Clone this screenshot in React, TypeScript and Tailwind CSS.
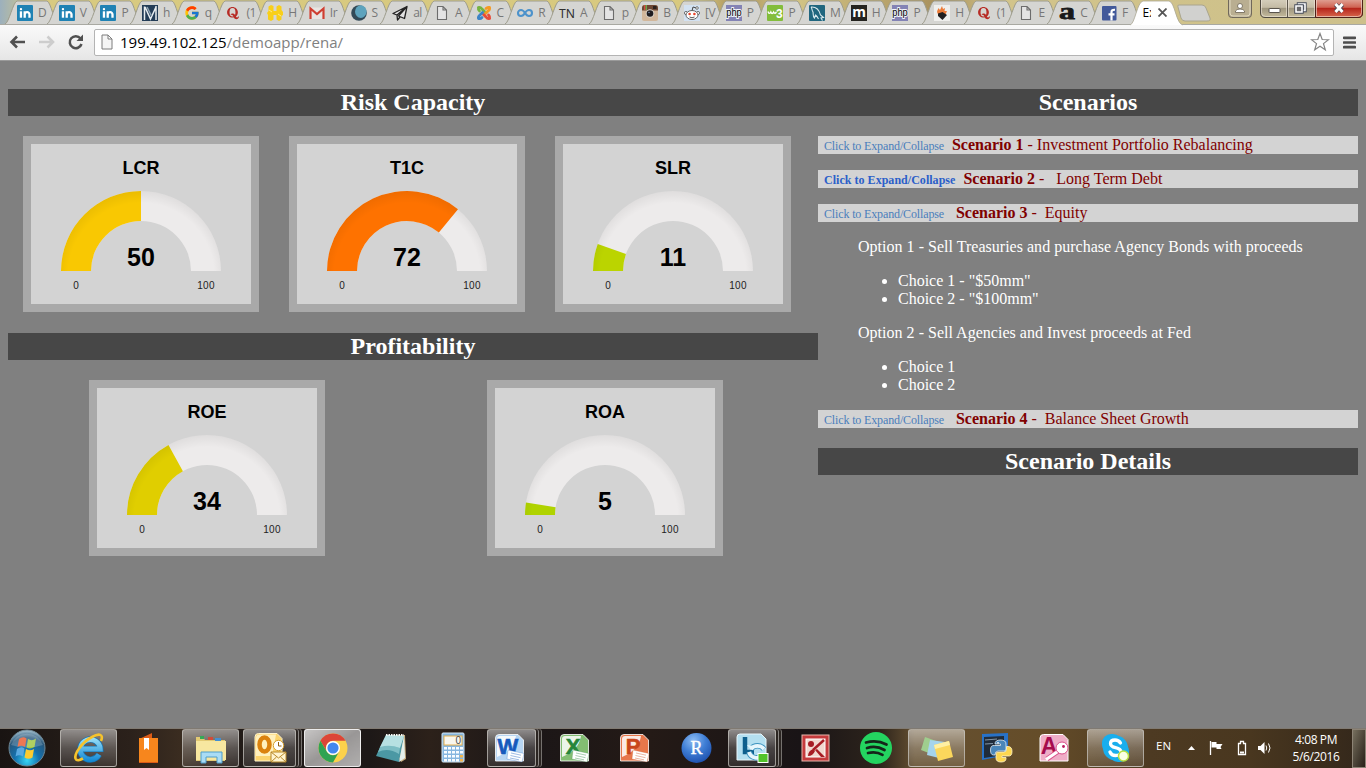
import React from "react";
import type { ReactNode } from "react";
import { FaQuora } from "react-icons/fa";
import { FcGoogle } from "react-icons/fc";

/* ---------- favicons ---------- */

function Fav({ children }: { children: ReactNode }) {
  return (
    <svg viewBox="0 0 16 16" className="h-4 w-4 shrink-0 overflow-visible">
      {children}
    </svg>
  );
}

const LinkedIn = () => (
  <Fav>
    <rect width="16" height="16" rx="1" fill="#1f82b4" />
    <rect x="2.800" y="6.300" width="2.300" height="6.400" fill="#fff" />
    <rect x="2.800" y="3" width="2.300" height="2.300" rx="1" fill="#fff" />
    <path d="M7.700 12.700V6.300M7.700 9.600c0-3 4.800-3.400 4.800 0v3.100" stroke="#fff" strokeWidth="2.300" fill="none" />
  </Fav>
);

const PageIcon = () => (
  <Fav>
    <path d="M3.500 1.500h5.500l3.500 3.500v9.500h-9zM9 1.500V5h3.500" fill="#e4e4e4" stroke="#6c6c6c" strokeWidth="1.100" />
  </Fav>
);

const MIcon = () => (
  <Fav>
    <rect width="16" height="16" fill="#243d57" />
    <path d="M2.500 15V1.500M3 2l5.500 12L14 2M14 1v14" stroke="#e8edf0" strokeWidth="1.500" fill="none" />
    <path d="M5 2l4.500 9" stroke="#8fa3b2" strokeWidth="1.500" />
  </Fav>
);

const GoogleIcon = () => <FcGoogle className="h-4 w-4 shrink-0" />;
const QuoraIcon = () => <FaQuora className="h-4 w-4 shrink-0 p-[1px] text-[#b72c26]" />;

const HiveIcon = () => (
  <Fav>
    <path d="M1.500 1.500L4 0l2.500 1v5h3V1.500L12 0l2.500 1.500V5L16 7v3l-1.500 1v3.500L12 16l-2.500-1.500V10h-3v4.500L4 16l-3-1.500V10l-1-2 1.500-2z" fill="#f8cf19" />
    <path d="M2 5l3 2M11 9l3 2" stroke="#fff0a0" strokeWidth="0.800" />
  </Fav>
);

const GmailIcon = () => (
  <Fav>
    <rect x="0.500" y="2.500" width="15" height="11.500" rx="1" fill="#e9e5e2" />
    <path d="M1.500 14V3.500L8 9l6.500-5.500V14" stroke="#cf3f32" strokeWidth="2.200" fill="none" />
  </Fav>
);

const MoonIcon = () => (
  <Fav>
    <circle cx="8" cy="8" r="7.800" fill="#324a58" />
    <ellipse cx="9.800" cy="6.600" rx="5.800" ry="6.300" fill="#5da3bd" />
  </Fav>
);

const PlaneIcon = () => (
  <Fav>
    <path d="M15 1.500L1 8.500l4 1.500L15 1.500 6.500 11l6 2.500zM5 10l.5 5 2.500-3" fill="#e2e2e2" stroke="#222" strokeWidth="1.300" strokeLinejoin="round" />
  </Fav>
);

const JoomlaIcon = () => (
  <Fav>
    <g fill="none" strokeWidth="2.800" strokeLinecap="round">
      <path d="M2.500 2.500Q4.500 2 6 4l2.500 2.500" stroke="#76b441" />
      <path d="M13.500 2.500Q14 4.500 12 6L9.500 8.500" stroke="#f59a22" />
      <path d="M13.500 13.500Q11.500 14 10 12L7.500 9.500" stroke="#e84b38" />
      <path d="M2.500 13.500Q2 11.500 4 10l2.500-2.500" stroke="#3d84c6" />
      <path d="M2.500 3Q2 4.800 3.500 6" stroke="#76b441" />
      <path d="M13 2.500Q11.500 2 10 3.500" stroke="#f59a22" />
      <path d="M13.500 13Q14 11.500 12.500 10" stroke="#e84b38" />
      <path d="M3 13.500Q4.500 14 6 12.500" stroke="#3d84c6" />
    </g>
  </Fav>
);

const LoopIcon = () => (
  <Fav>
    <path d="M8 8C6.500 5.500 5.500 5 4 5a3 3 0 000 6c1.500 0 2.500-.5 4-3s2.500-3 4-3a3 3 0 010 6c-1.500 0-2.500-.5-4-3z" stroke="#4c92cb" strokeWidth="2.100" fill="none" />
  </Fav>
);

const TnIcon = () => (
  <Fav>
    <text x="0" y="12.500" fontSize="12.500" textLength="16" lengthAdjust="spacingAndGlyphs" fill="#2e2e2e" fontFamily="Noto Sans, sans-serif">TN</text>
  </Fav>
);

const InstaIcon = () => (
  <Fav>
    <rect width="16" height="16" rx="2" fill="#d2b79b" />
    <path d="M0 5.500h16V3a3 3 0 00-3-3H3a3 3 0 00-3 3z" fill="#6d4733" />
    <path d="M2 0h1.500v5H2z" fill="#d4483d" />
    <path d="M3.500 0H5v5H3.500z" fill="#6ba24a" />
    <rect x="11" y="1" width="3.500" height="3" fill="#2b211d" />
    <circle cx="8" cy="8.500" r="4.300" fill="#d9d2c8" />
    <circle cx="8" cy="8.500" r="3.300" fill="#1f1c1f" />
    <circle cx="7" cy="7.500" r="0.800" fill="#7488a8" />
  </Fav>
);

const RedditIcon = () => (
  <Fav>
    <rect width="16" height="16" fill="#d3e2f2" />
    <path d="M8 6l1-4 3.500 1" stroke="#444" fill="none" />
    <circle cx="13" cy="3" r="1.300" fill="#fff" stroke="#555" strokeWidth="0.800" />
    <circle cx="2" cy="8" r="1.600" fill="#fff" stroke="#555" strokeWidth="0.800" />
    <circle cx="14" cy="8" r="1.600" fill="#fff" stroke="#555" strokeWidth="0.800" />
    <ellipse cx="8" cy="10" rx="6" ry="4.500" fill="#fff" stroke="#555" strokeWidth="0.900" />
    <circle cx="5.600" cy="9" r="1.300" fill="#e8442c" />
    <circle cx="10.400" cy="9" r="1.300" fill="#e8442c" />
    <path d="M5.500 12q2.500 1.500 5 0" stroke="#444" strokeWidth="0.900" fill="none" />
  </Fav>
);

const PhpIcon = () => (
  <Fav>
    <rect width="16" height="16" fill="#8383b5" />
    <text x="0.300" y="11" fontSize="10.500" textLength="15.400" lengthAdjust="spacingAndGlyphs" stroke="#f4f4fa" strokeWidth="2" paintOrder="stroke" fill="#000" fontFamily="Liberation Sans, sans-serif">php</text>
  </Fav>
);

const W3Icon = () => (
  <Fav>
    <rect width="16" height="16" rx="1" fill="#83bd3c" />
    <path d="M1 6.500q1.200 3.500 2.800.5 1.200 3 2.800 0 1.200 2.500 2.800 0" stroke="#fff" strokeWidth="1.400" fill="none" />
    <text x="9" y="12.500" fontSize="12" fontWeight="bold" fill="#fff" fontFamily="Liberation Sans, sans-serif">3</text>
  </Fav>
);

const MysqlIcon = () => (
  <Fav>
    <rect width="16" height="16" rx="1" fill="#20667f" />
    <path d="M2 2c6-.5 8.500 4 9.500 8l3 2.500-2.500.5 1.500 2.500M2 2c1.500 2 .5 3 2 5 .5 2-.5 4 1.500 6l1-3c1.500 1 2 2 3 4" stroke="#d8e8ed" strokeWidth="1.100" fill="none" />
  </Fav>
);

const DarkMIcon = () => (
  <Fav>
    <rect width="16" height="16" fill="#24231f" />
    <text x="8" y="12" textAnchor="middle" fontSize="14" fontWeight="bold" fill="#fff" fontFamily="Noto Sans, sans-serif">m</text>
  </Fav>
);

const FlameIcon = () => (
  <Fav>
    <rect width="16" height="16" fill="#efefed" />
    <path d="M4 9c-2-3 0-4 .5-6L6 5l2-4 1 3 2-1-.5 3L13 6c-1 2-1 3-2 4H5z" fill="#ec7b38" />
    <path d="M4 8.500l4.500-1.500 4.500 3L8.500 15 4 11z" fill="#211f20" />
  </Fav>
);

const AIcon = () => (
  <Fav>
    <text x="0" y="13.500" fontSize="23" fontWeight="bold" textLength="16" lengthAdjust="spacingAndGlyphs" fill="#191919" stroke="#191919" strokeWidth="0.800" fontFamily="Liberation Serif, serif">a</text>
  </Fav>
);

const FbIcon = () => (
  <Fav>
    <rect x="1" y="1" width="14.500" height="14.500" rx="1" fill="#42599a" />
    <path d="M10.500 15.500V7q0-2.500 3.500-2.200M7.500 9.300h6" stroke="#fff" strokeWidth="2.200" fill="none" />
  </Fav>
);

const tabs: { icon: () => ReactNode; label: string }[] = [
  { icon: LinkedIn, label: "D" },
  { icon: LinkedIn, label: "V" },
  { icon: LinkedIn, label: "P" },
  { icon: MIcon, label: "h" },
  { icon: GoogleIcon, label: "q" },
  { icon: QuoraIcon, label: "(1" },
  { icon: HiveIcon, label: "H" },
  { icon: GmailIcon, label: "Ir" },
  { icon: MoonIcon, label: "S" },
  { icon: PlaneIcon, label: "al" },
  { icon: PageIcon, label: "A" },
  { icon: JoomlaIcon, label: "C" },
  { icon: LoopIcon, label: "R" },
  { icon: TnIcon, label: "A" },
  { icon: PageIcon, label: "p" },
  { icon: InstaIcon, label: "B" },
  { icon: RedditIcon, label: "[V" },
  { icon: PhpIcon, label: "P" },
  { icon: W3Icon, label: "P" },
  { icon: MysqlIcon, label: "M" },
  { icon: DarkMIcon, label: "H" },
  { icon: PhpIcon, label: "P" },
  { icon: FlameIcon, label: "H" },
  { icon: QuoraIcon, label: "(1" },
  { icon: PageIcon, label: "E" },
  { icon: AIcon, label: "C" },
  { icon: FbIcon, label: "F" },
];

function Tab({ icon: Icon, label }: { icon: () => ReactNode; label: string }) {
  return (
    <div className="grid h-6 w-[41.7px] shrink-0">
      <svg viewBox="0 0 57 24" className="col-start-1 row-start-1 h-6 w-[57px] overflow-visible">
        <path d="M0 24C4 23 8 2 12 1H42C46 2 49 23 54 24" fill="#d5d5d2" stroke="#9d9c8c" />
      </svg>
      <div className="z-10 col-start-1 row-start-1 flex items-center gap-[5px] pl-3 pt-[2px] font-['Open_Sans',sans-serif] text-[12px] leading-4 text-[#777]">
        <Icon />
        <span className="w-3 whitespace-nowrap tracking-[-0.5px]">{label}</span>
      </div>
    </div>
  );
}

function TabStrip() {
  return (
    <div className="flex h-6 shrink-0 bg-[linear-gradient(90deg,#9cb0bd_0px,#d8ca80_35px,#d8c97f_700px,#a8905c_735px,#d4c686_790px,#a8905c_940px,#d2c48a_1000px,#cdc08b_1366px)] pl-[5px]">
      {tabs.map((t, i) => (
        <Tab key={i} icon={t.icon} label={t.label} />
      ))}
      <div className="z-10 grid h-[25px] w-[46px] shrink-0">
        <svg viewBox="0 0 56 25" className="col-start-1 row-start-1 h-[25px] w-14 overflow-visible">
          <path d="M-1 25C4 24 6 2 12 1H38C44 2 45 24 52 25" fill="#fff" stroke="#aaa693" strokeWidth="0.800" />
        </svg>
        <div className="z-10 col-start-1 row-start-1 flex items-center gap-[7px] pl-3 font-['Open_Sans',sans-serif] text-[12px] text-black">
          <span className="w-2 overflow-hidden">Ex</span>
          <svg viewBox="0 0 9 9" className="h-[9px] w-[9px]">
            <path d="M0.500 0.500l8 8M8.500 0.500l-8 8" stroke="#555" strokeWidth="1.800" />
          </svg>
        </div>
      </div>
      <svg viewBox="0 0 34 18" className="mt-[4px] h-[18px] w-[34px] shrink-0">
        <path d="M2 1h23q3 0 4 3l4 10q1 3-3 3H8q-3 0-4-3L1 3Q0 1 2 1z" fill="#d1d1cf" stroke="#aaa58e" />
      </svg>
      <div className="ml-[17px] flex h-[18px] gap-2">
        <svg viewBox="0 0 24 18" className="h-[18px] w-6">
          <path d="M.5-1v15q0 3.500 3 3.500h17q3 0 3-3.500V-1" fill="#b9ae91" stroke="#70685b" />
          <path d="M2-1v14q0 3 3 3h14q3 0 3-3V-1" fill="none" stroke="#e2dac1" />
          <path d="M7.500 12.500V11q1-2 4.500-2t4.500 2v1.500z" fill="#fff" stroke="#766e5e" strokeWidth="0.900" />
          <circle cx="12" cy="6" r="2.500" fill="#fff" stroke="#766e5e" strokeWidth="0.900" />
        </svg>
        <svg viewBox="0 0 103 18" className="h-[18px] w-[103px]">
          <defs>
            <linearGradient id="wb" x2="0" y2="1">
              <stop offset="0" stopColor="#d6cfbd" />
              <stop offset="0.450" stopColor="#c4bba5" />
              <stop offset="0.500" stopColor="#9f967f" />
              <stop offset="1" stopColor="#c6bc9d" />
            </linearGradient>
            <linearGradient id="wx" x2="0" y2="1">
              <stop offset="0" stopColor="#e1a598" />
              <stop offset="0.450" stopColor="#cf6252" />
              <stop offset="0.500" stopColor="#b5241a" />
              <stop offset="1" stopColor="#d9694f" />
            </linearGradient>
          </defs>
          <path d="M.5-1v14q0 4.500 4.500 4.500h93q4.500 0 4.500-4.500V-1z" fill="url(#wb)" stroke="#4f4940" />
          <path d="M55.500-1v18.500H98q4.500 0 4.500-4.500V-1z" fill="url(#wx)" stroke="#502019" />
          <path d="M1.500 0v12.500q0 4 4 4h21V0M28.500 0v16.500h26V0M56.500 0v16.500h41q4 0 4-4V0" stroke="#f0e8dc" strokeOpacity="0.600" fill="none" />
          <path d="M27.500 0v17" stroke="#5c564b" />
          <rect x="9" y="8.500" width="11" height="4" rx="0.500" fill="#fff" stroke="#59544d" />
          <path d="M38.500 4h6.500v6.500h-6.500z" fill="none" stroke="#474d5c" strokeWidth="3.400" />
          <path d="M38.500 4h6.500v6.500h-6.500z" fill="none" stroke="#fff" strokeWidth="1.600" />
          <path d="M36 6h6v6h-6z" fill="#8e8b87" stroke="#474d5c" strokeWidth="3.400" />
          <path d="M36 6h6v6h-6z" fill="#69686a" stroke="#fff" strokeWidth="1.600" />
          <path d="M75.500 4.500l7 7M82.500 4.500l-7 7" stroke="#4c4855" strokeWidth="4.500" />
          <path d="M75.500 4l7 8M82.500 4l-7 8" stroke="#fff" strokeWidth="2.800" />
        </svg>
      </div>
    </div>
  );
}

function Toolbar() {
  return (
    <div className="flex h-[37px] shrink-0 items-center border-b border-t border-b-[#9a9a9a] border-t-[#a9a9a2] bg-gradient-to-b from-[#fafafa] to-[#e6e6e6] pb-[1px] pl-[9px]">
      <svg viewBox="0 0 76 18" className="h-[18px] w-[76px]">
        <path d="M16 9H3M8 3.500L2.500 9 8 14.500" stroke="#505050" strokeWidth="2.600" fill="none" />
        <path d="M30 9h13M38.500 3.500L44 9l-5.500 5.500" stroke="#cdcdcd" strokeWidth="2.600" fill="none" />
        <path d="M71.500 5.500A6 6 0 1072.500 11" stroke="#505050" strokeWidth="2.500" fill="none" />
        <path d="M74 1.500v6.500h-6.500z" fill="#505050" />
      </svg>
      <div className="ml-[9px] flex h-[27px] w-[1240px] items-center rounded-[2px] border border-[#b4b4b4] bg-white pl-[5px] pr-[3px]">
        <svg viewBox="0 0 14 16" className="h-4 w-[14px]">
          <path d="M2 1h6l4 4v10H2zM8 1v4h4" fill="#f5f5f5" stroke="#7d7d7d" />
        </svg>
        <span className="ml-[6px] font-['Open_Sans',sans-serif] text-[15px] tracking-[0.04px] text-[#808080]">
          <span className="text-black">199.49.102.125</span>/demoapp/rena/
        </span>
        <svg viewBox="0 0 20 20" className="ml-auto h-5 w-5">
          <path d="M10 1.500l2.200 6 6.300.2-5 3.900 1.800 6.200-5.300-3.600-5.300 3.600 1.800-6.200-5-3.900 6.300-.2z" fill="#fff" stroke="#858585" strokeWidth="1.200" />
        </svg>
      </div>
      <svg viewBox="0 0 13 13" className="ml-[9px] h-[13px] w-[13px]">
        <path d="M1 1.800h11M1 6.500h11M1 11.200h11" stroke="#4d4d4d" strokeWidth="2.700" strokeLinecap="round" />
      </svg>
    </div>
  );
}

/* ---------- dashboard ---------- */

function Heading({ children }: { children: ReactNode }) {
  return <h2 className="h-[27px] bg-[#474747] text-center text-[24px] font-bold leading-[27px] text-white">{children}</h2>;
}

function Gauge({ title, value, color }: { title: string; value: number; color: string }) {
  const a = Math.PI * (1 - value / 100);
  const pt = (r: number) => `${110 + r * Math.cos(a)} ${127 - r * Math.sin(a)}`;
  const id = `rim-${title}`;
  return (
    <div className="h-44 w-[236px] shrink-0 border-8 border-[#a9a9a9] bg-[#d3d3d3]">
      <svg viewBox="0 0 220 160" className="h-40 w-[220px] font-['Liberation_Sans',Arial,sans-serif]">
        <defs>
          <radialGradient id={id} gradientUnits="userSpaceOnUse" cx="110" cy="132" r="85">
            <stop offset="0.860" stopColor="#000" stopOpacity="0" />
            <stop offset="1" stopColor="#000" stopOpacity="0.060" />
          </radialGradient>
        </defs>
        <path d="M30 127A80 80 0 01190 127H160A50 50 0 0060 127Z" fill="#edebeb" />
        <path d={`M30 127A80 80 0 01${pt(80)}L${pt(50)}A50 50 0 0060 127Z`} fill={color} />
        <path d="M30 127A80 80 0 01190 127H160A50 50 0 0060 127Z" fill={`url(#${id})`} />
        <text x="110" y="30" textAnchor="middle" fontSize="18" fontWeight="bold">{title}</text>
        <text x="110" y="122" textAnchor="middle" fontSize="25" fontWeight="bold">{value}</text>
        <text x="45" y="145" textAnchor="middle" fontSize="10" fill="#222">0</text>
        <text x="175" y="145" textAnchor="middle" fontSize="10" letterSpacing="0.300" fill="#222">100</text>
      </svg>
    </div>
  );
}

function ScenarioRow({ name, rest, gap, active }: { name: string; rest: string; gap: string; active?: boolean }) {
  return (
    <div className="mb-4 h-[18px] whitespace-pre bg-[#d3d3d3] pl-[6px] text-[16px] leading-[18px] text-[#800000]">
      <span className={active ? "text-[12px] font-bold tracking-[0.03px] text-[#2b5fc9]" : "text-[12px] tracking-[-0.14px] text-[#4a7ebb]"}>
        Click to Expand/Collapse
      </span>
      {gap}
      <b>{name}</b>
      {rest}
    </div>
  );
}

function Dashboard() {
  return (
    <main className="flex min-h-0 flex-1 bg-[#808080] px-2 pt-7 font-['Liberation_Serif','Times_New_Roman',serif]">
      <section className="w-[810px]">
        <Heading>Risk Capacity</Heading>
        <div className="mb-[21px] mt-5 flex gap-[30px] pl-[15px]">
          <Gauge title="LCR" value={50} color="#f9c802" />
          <Gauge title="T1C" value={72} color="#fe7200" />
          <Gauge title="SLR" value={11} color="#bbd400" />
        </div>
        <Heading>Profitability</Heading>
        <div className="mt-5 flex gap-[162px] pl-[81px]">
          <Gauge title="ROE" value={34} color="#e0ce00" />
          <Gauge title="ROA" value={5} color="#b0d300" />
        </div>
      </section>
      <section className="w-[540px] text-[16px] leading-[18px] text-white">
        <Heading>Scenarios</Heading>
        <div className="mt-5">
          <ScenarioRow name="Scenario 1" rest=" - Investment Portfolio Rebalancing" gap={"\u00a0 "} />
          <ScenarioRow name="Scenario 2" rest={" - \u00a0 Long Term Debt"} gap={"\u00a0 "} active />
          <ScenarioRow name="Scenario 3" rest={" - \u00a0Equity"} gap={"\u00a0\u00a0 "} />
          <div className="pl-10">
            <p className="mb-4 tracking-[0.02px]">Option 1 - Sell Treasuries and purchase Agency Bonds with proceeds</p>
            <ul className="mb-4 list-disc pl-10">
              <li>Choice 1 - "$50mm"</li>
              <li>Choice 2 - "$100mm"</li>
            </ul>
            <p className="mb-4 tracking-[0.02px]">Option 2 - Sell Agencies and Invest proceeds at Fed</p>
            <ul className="mb-4 list-disc pl-10">
              <li>Choice 1</li>
              <li>Choice 2</li>
            </ul>
          </div>
          <ScenarioRow name="Scenario 4" rest={" - \u00a0Balance Sheet Growth"} gap={"\u00a0\u00a0 "} />
        </div>
        <div className="mt-5">
          <Heading>Scenario Details</Heading>
        </div>
      </section>
    </main>
  );
}

/* ---------- taskbar ---------- */

function Big({ children }: { children: ReactNode }) {
  return (
    <svg viewBox="0 0 32 32" className="h-8 w-8 shrink-0 overflow-visible">
      {children}
    </svg>
  );
}

function OfficeIcon({ letter, dark, light }: { letter: string; dark: string; light: string }) {
  return (
    <Big>
      <path d="M1.500 6q0-3.500 3.500-3.500h19l5.500 5.500v21h-28z" fill={light} stroke="#fff" strokeWidth="0.800" />
      <path d="M3 7q0-3 3-3h16q-2 14-19 21z" fill="#fff" fillOpacity="0.850" />
      <text x="14" y="21.500" textAnchor="middle" fontSize="22" fontWeight="bold" fill={dark} stroke={dark} strokeWidth="0.600" fontFamily="Liberation Sans, sans-serif">{letter}</text>
      <path d="M14 18l16 3.500-2 8.500-15-3z" fill="#fff" stroke={dark} strokeOpacity="0.500" strokeWidth="0.500" />
      <path d="M17 21l10 2.200M16.500 23.500l10 2.200M16 26l9 1.800" stroke={dark} strokeOpacity="0.400" />
    </Big>
  );
}

const StartOrb = () => (
  <svg viewBox="0 0 38 38" className="h-[38px] w-[38px]">
    <defs>
      <radialGradient id="orb" cx="0.500" cy="0.850" r="0.850">
        <stop offset="0" stopColor="#38d5f5" />
        <stop offset="0.400" stopColor="#1471ae" />
        <stop offset="0.750" stopColor="#27577b" />
        <stop offset="1" stopColor="#a9c4d2" />
      </radialGradient>
    </defs>
    <circle cx="19" cy="19" r="18" fill="url(#orb)" stroke="#6e8794" />
    <path d="M11 10q4-3 7.500-.5L17 18q-4-2.500-7.500 0z" fill="#e8572a" />
    <path d="M20 10q4 2.500 8-.5L26.500 18q-4 2.500-8 .5z" fill="#9cc53b" />
    <path d="M9 20q4-3 7.500-.5L15 27.500q-4-2.500-7.500 0z" fill="#5aa9e0" />
    <path d="M18 20q4 2.500 8 0l-1.500 8.500q-4 2.500-8 0z" fill="#fccb2f" />
    <path d="M3 16A17 17 0 0135 16Q19 21 3 16z" fill="#fff" fillOpacity="0.200" />
  </svg>
);

const IeIcon = () => (
  <svg viewBox="0 0 34 34" className="h-[34px] w-[34px]">
    <defs>
      <linearGradient id="ie" gradientUnits="userSpaceOnUse" x1="0" y1="5" x2="0" y2="30">
        <stop offset="0" stopColor="#a5e6fb" />
        <stop offset="1" stopColor="#1489d4" />
      </linearGradient>
    </defs>
    <path d="M27 23.500A10 10 0 1128.300 18H10" fill="none" stroke="#1673b2" strokeWidth="6.200" />
    <path d="M27 23.500A10 10 0 1128.300 18H10" fill="none" stroke="url(#ie)" strokeWidth="4.800" />
    <path d="M29 10c3-7-2-8-9-4C10 11 2 23 3.500 27.500c1 2.500 4 2 7.500 0" fill="none" stroke="#f6c32c" strokeWidth="2.600" />
  </svg>
);

const BookIcon = () => (
  <Big>
    <path d="M6 7l13-6v6h6v24H6z" fill="#dc5b17" />
    <path d="M6 6h19v24H6z" fill="#f7861d" />
    <path d="M11 6h5v12l-2.500-2-2.500 2z" fill="#fff" />
  </Big>
);

const FolderIcon = () => (
  <Big>
    <path d="M1 5h7l2 3h20v21H1z" fill="#e3ca73" />
    <path d="M5 4h4v3H5z" fill="#35a957" />
    <path d="M13 5h5v3h-5z" fill="#d34a37" />
    <path d="M20 6h6v4h-6z" fill="#4390d2" />
    <path d="M1 9h30v19H1z" fill="#f7e7a0" />
    <path d="M6 31V20h21v11h-5v-6H11v6z" fill="#a9dcf5" stroke="#4f9ecb" />
  </Big>
);

const OutlookIcon = () => (
  <Big>
    <path d="M1 5q0-3.500 3.500-3.500H23l5 5V29H1z" fill="#fbd36d" stroke="#fff3cc" />
    <path d="M2 6q0-3.500 3-3.500h17L18 24H2z" fill="#fff0bd" />
    <ellipse cx="10.500" cy="12.500" rx="5" ry="7" fill="none" stroke="#db820e" strokeWidth="4.500" />
    <circle cx="24.500" cy="13.500" r="5.200" fill="#fff" stroke="#d6a030" />
    <path d="M24.500 10v4h3" stroke="#916015" fill="none" />
    <path d="M17 20h15v10H17z" fill="#fff4cf" stroke="#b78828" />
    <path d="M17 20l7.500 6 7.500-6M17 30l5.500-5M32 30l-5.500-5" fill="none" stroke="#b78828" />
  </Big>
);

const ChromeIcon = () => (
  <Big>
    <circle cx="16" cy="16" r="14.500" fill="#fcd14b" />
    <path d="M3.400 8.800A14.500 14.500 0 0128.600 8.800H16A7.200 7.200 0 009.800 19.600z" fill="#dc4538" />
    <path d="M3.400 8.800A14.500 14.500 0 0016 30.500l6.200-10.900A7.200 7.200 0 019.800 19.600z" fill="#30a353" />
    <circle cx="16" cy="16" r="7" fill="#fff" />
    <circle cx="16" cy="16" r="5.600" fill="#4287ef" />
  </Big>
);

const NotepadIcon = () => (
  <Big>
    <path d="M11 3h19l1 24-5 3z" fill="#c6ad80" />
    <path d="M11 3l18 1-5 26L1 24z" fill="#4b98a4" />
    <path d="M11 3l18 1-4 12L5 15z" fill="#b7e0e2" />
    <path d="M5 15q10-3 20 1l-1 6Q13 15 3 20z" fill="#7dbdc4" />
    <path d="M24 30l5-26 1 22z" fill="#e5f0ec" />
    <path d="M11 3h18" stroke="#f4f6f3" strokeWidth="2" strokeDasharray="1.500 1" />
  </Big>
);

const CalcIcon = () => (
  <Big>
    <rect x="5" y="1" width="22" height="29" rx="1" fill="#86b6df" stroke="#d6e9f7" />
    <rect x="7" y="4" width="18" height="9" fill="#f9f7ee" stroke="#e8b04d" />
    <text x="18.500" y="12" fontSize="10" fill="#4b4b4b" fontFamily="Liberation Sans, sans-serif">0</text>
    {[16, 20, 24, 28].map((y) =>
      [8, 12, 16, 20, 24].map((x) => <rect key={`${x}-${y}`} x={x - 1} y={y - 1} width="3" height="2.500" fill={x === 24 && y > 20 ? "#f3b64d" : "#f8fcff"} />)
    )}
  </Big>
);

const RIcon = () => (
  <svg viewBox="0 0 32 32" className="h-8 w-8">
    <defs>
      <radialGradient id="rr" cx="0.400" cy="0.250" r="0.800">
        <stop offset="0" stopColor="#8dbcf2" />
        <stop offset="0.500" stopColor="#3f7ed5" />
        <stop offset="1" stopColor="#1c4eac" />
      </radialGradient>
    </defs>
    <circle cx="15.500" cy="16" r="15" fill="url(#rr)" />
    <text x="15.500" y="21.500" textAnchor="middle" fontSize="18" fill="#fff" stroke="#fff" strokeWidth="0.400" fontFamily="Liberation Serif, serif">R</text>
  </svg>
);

const LyncIcon = () => (
  <Big>
    <path d="M1 5q0-3 3-3h21l5 5v21H1z" fill="#b4dff0" stroke="#e9f6fb" />
    <path d="M9 5v15h9" stroke="#0e5f8d" strokeWidth="4.500" fill="none" />
    <path d="M28 17a8 7.500 0 00-13 0M13 20a8 7.500 0 0014 3" stroke="#3d93bf" strokeWidth="5.500" fill="none" />
    <path d="M28 17a8 7.500 0 00-13 0M13 20a8 7.500 0 0014 3" stroke="#e7f6fc" strokeWidth="3.800" fill="none" />
    <path d="M11 13l4 5 4-4z" fill="#e7f6fc" />
    <rect x="22" y="21.500" width="10" height="9" fill="#52c32b" stroke="#fff" />
  </Big>
);

const ToolsIcon = () => (
  <Big>
    <rect x="2" y="3" width="27" height="26" fill="#c43a3c" stroke="#e7b7ae" />
    <rect x="6" y="7" width="19" height="18" fill="#f1d8d0" stroke="#fff" />
    <circle cx="11" cy="12" r="3" fill="#a71c24" />
    <path d="M24 8L13 18" stroke="#a71c24" strokeWidth="2.400" />
    <path d="M8 24q0-5 5-7l2 2q-2 5-7 5zM15 18l2-1 8 8h-4z" fill="#a71c24" />
  </Big>
);

const SpotifyIcon = () => (
  <svg viewBox="0 0 32 32" className="h-8 w-8">
    <circle cx="16" cy="16" r="16" fill="#24d460" />
    <path d="M6 10.500q11-3 20.500 2M7 16q9-3 17.500 2M8 21q8-2 14.500 1.800" stroke="#15251a" strokeWidth="2.700" strokeLinecap="round" fill="none" />
  </svg>
);

const StickyIcon = () => (
  <Big>
    <path d="M4 5l14 5-5 13-13-5z" fill="#9fce8e" />
    <path d="M9 8l15 2-2 17-16-4z" fill="#a5d4ed" />
    <path d="M13 13l15-4 4 16-15 4z" fill="#fbd75c" />
    <path d="M13 13l15-4 1 4-15 4z" fill="#fff0a3" />
  </Big>
);

const PythonIcon = () => (
  <Big>
    <path d="M1 2l26-1v22L1 28z" fill="#2872c7" />
    <path d="M3 5l20-1v19L3 26z" fill="#202c3a" />
    <path d="M4 8l12-1M4 12l8-.5" stroke="#8396a7" />
    <g strokeWidth="0.800">
      <path d="M14 12q0-4 5.500-4t5.500 4v5q0 2-2 2h-6q-3 0-3 4h-1.500q-3 0-3-5t4-4.500h6v-1.500z" fill="#4a86b9" stroke="#e4edf3" />
      <path d="M25.500 14.500H27q4 0 4 5t-4 4.500h-6v1.500h4v1q0 3.500-5 3.500t-5-4v-4q0-2 2-2h6q2.500 0 2.500-3z" fill="#fdd650" stroke="#fff5cc" />
    </g>
    <circle cx="17" cy="10.800" r="0.900" fill="#fff" />
  </Big>
);

const AccessIcon = () => (
  <Big>
    <path d="M2 6q0-3.500 3.500-3.500H25l5 5V29H2z" fill="#efadc7" stroke="#fff" />
    <text x="11" y="21.500" textAnchor="middle" fontSize="23" fontWeight="bold" fill="#a50b4d" fontFamily="Liberation Sans, sans-serif">A</text>
    <path d="M22 18L9 27" stroke="#d9508a" strokeWidth="5" />
    <path d="M22 18L8 27.500" stroke="#fff" strokeWidth="3.200" />
    <circle cx="24" cy="16" r="6" fill="#fff" stroke="#d9508a" />
    <circle cx="25.500" cy="14.500" r="1.400" fill="#b91b5f" />
  </Big>
);

const SkypeIcon = () => (
  <Big>
    <rect x="2" y="2" width="20" height="20" rx="9" fill="#19aeed" />
    <rect x="9" y="10" width="20" height="20" rx="9" fill="#19aeed" />
    <circle cx="15.500" cy="16" r="12.500" fill="#19aeed" />
    <path d="M20.500 11q-2-3-5.500-3-4.500 0-4.500 3.500 0 3 5 4.200 5.500 1.300 5.500 4.300 0 3.500-5.500 3.500-4 0-5.500-3.500" stroke="#fff" strokeWidth="3.300" strokeLinecap="round" fill="none" />
    <circle cx="23.500" cy="24" r="5" fill="#f9ffe4" stroke="#b7df41" strokeWidth="1.500" />
  </Big>
);

type TaskItem = { icon: ReactNode; w: string; look?: "plain" | "on" | "bright" | "stack" };

const items: TaskItem[] = [
  { icon: <StartOrb />, w: "w-[54px]" },
  { icon: <IeIcon />, w: "ml-[6px] w-[57px]", look: "on" },
  { icon: <BookIcon />, w: "ml-[1px] w-[62px]" },
  { icon: <FolderIcon />, w: "ml-[2px] w-[57px]", look: "on" },
  { icon: <OutlookIcon />, w: "ml-1 w-[53px]", look: "stack" },
  { icon: <ChromeIcon />, w: "ml-2 w-[57px]", look: "bright" },
  { icon: <NotepadIcon />, w: "w-[60px]" },
  { icon: <CalcIcon />, w: "ml-[1px] w-[61px]" },
  { icon: <OfficeIcon letter="W" dark="#175abc" light="#b7d5f2" />, w: "ml-[4px] w-[49px] pr-1", look: "stack" },
  { icon: <OfficeIcon letter="X" dark="#26863b" light="#83bd72" />, w: "ml-[11px] w-[56px]" },
  { icon: <OfficeIcon letter="P" dark="#c9461b" light="#e7774b" />, w: "ml-[4px] w-[56px]" },
  { icon: <RIcon />, w: "ml-[6px] w-[56px]" },
  { icon: <LyncIcon />, w: "ml-[3px] w-[48px]", look: "stack" },
  { icon: <ToolsIcon />, w: "ml-[12px] w-[56px]" },
  { icon: <SpotifyIcon />, w: "ml-[4px] w-[56px]" },
  { icon: <StickyIcon />, w: "ml-[4px] w-[57px]", look: "on" },
  { icon: <PythonIcon />, w: "ml-[4px] w-[56px]" },
  { icon: <AccessIcon />, w: "ml-[1px] w-[56px]" },
  { icon: <SkypeIcon />, w: "ml-[5px] w-[57px]", look: "on" },
];

const looks = {
  plain: "",
  on: "rounded-[3px] border border-[#c9c6c0]/70 bg-gradient-to-b from-white/50 via-white/25 to-white/10",
  bright: "rounded-[3px] border border-white/80 bg-gradient-to-br from-white/75 via-white/55 to-white/65",
  stack:
    "rounded-[3px] border border-[#c9c6c0]/70 bg-gradient-to-b from-white/50 via-white/20 to-white/10 shadow-[2px_0_0_#2b2522,3px_0_0_#8b8784,5px_0_0_#2b2522,6px_0_0_#75716e]",
};

function Taskbar() {
  return (
    <footer className="flex h-10 shrink-0 items-center border-t border-[#807a72] bg-[linear-gradient(90deg,#191412_0px,#2b211b_130px,#3a2c20_180px,#221b18_240px,#1d1817_370px,#2c211a_430px,#1b1617_530px,#241a16_650px,#191416_800px,#2d241c_880px,#655031_915px,#654d29_1040px,#4d3a22_1150px,#49371f_1250px,#33271b_1366px)] pb-[1px]">
      {items.map((it, i) => (
        <div key={i} className={`flex h-[38px] shrink-0 items-center justify-center ${it.w} ${looks[it.look ?? "plain"]}`}>
          {it.icon}
        </div>
      ))}
      <div className="ml-[12px] flex flex-1 items-center font-['Open_Sans',sans-serif] text-white">
        <span className="w-[22px] pb-1 text-[11.5px]">EN</span>
        <svg viewBox="0 0 90 20" className="ml-[9px] h-5 w-[90px]">
          <path d="M1 12l3.500-4L8 12z" fill="#fff" />
          <path d="M23.500 3v14" stroke="#fff" strokeWidth="1.300" />
          <path d="M24.500 4h5v2h6l-2 3 1 2h-5V9.500h-5z" fill="#fff" />
          <path d="M51.500 5.500h2v-2h3v2h2v11h-7z" fill="none" stroke="#fff" strokeWidth="1.300" />
          <path d="M53 13.500h4v2h-4z" fill="#fff" />
          <path d="M71 8h2.500l4-4v12l-4-4H71z" fill="#fff" />
          <path d="M79 7.500q1.500 2.500 0 5M81.500 5.500q3 4.500 0 9" stroke="#fff" fill="none" />
        </svg>
        <div className="ml-auto w-[70px] text-center text-[12px] leading-[17px] tracking-[-0.4px]">
          <div>4:08 PM</div>
          <div>5/6/2016</div>
        </div>
        <div className="ml-[1px] h-[39px] w-[14px] border border-[#8c8375] bg-gradient-to-br from-[#77705f] to-[#292119]" />
      </div>
    </footer>
  );
}

export default function App() {
  return (
    <div className="flex h-[768px] w-[1366px] flex-col overflow-hidden bg-[#808080]">
      <TabStrip />
      <Toolbar />
      <Dashboard />
      <Taskbar />
    </div>
  );
}
